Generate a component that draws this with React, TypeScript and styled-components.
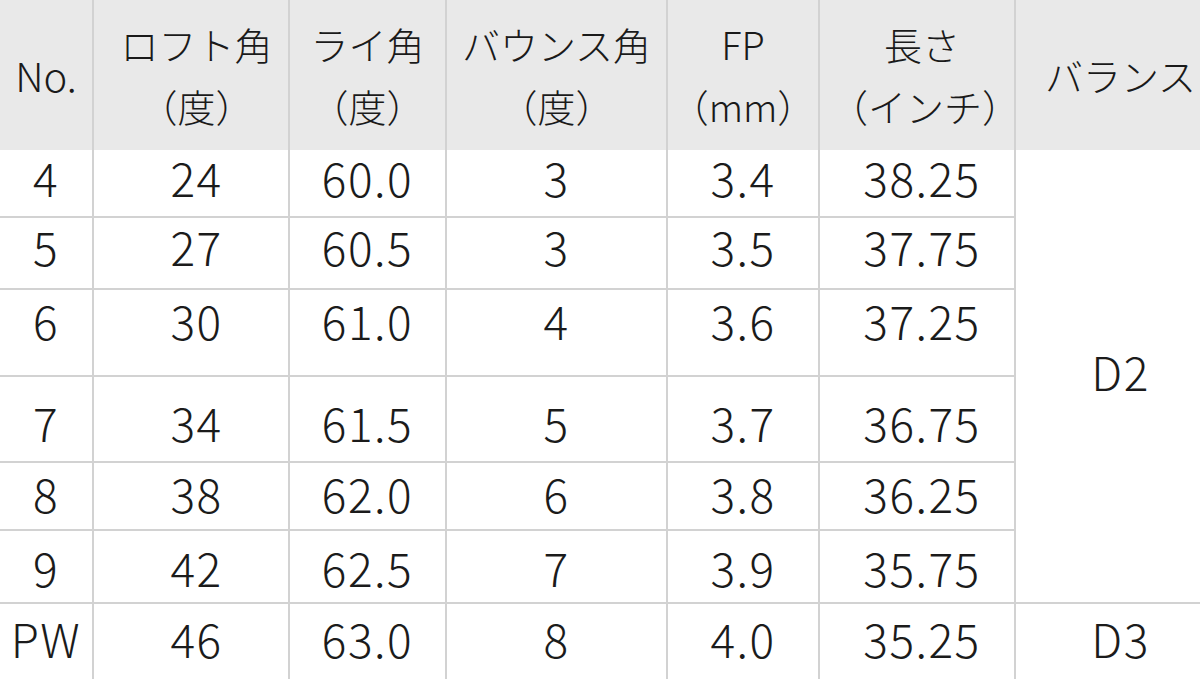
import React from "react";
import styled, { createGlobalStyle } from "styled-components";

const Global = createGlobalStyle`
  html, body { margin: 0; padding: 0; background: #ffffff; overflow: hidden; }
  body { font-family: "Noto Sans CJK JP", "Noto Sans", sans-serif; color: #1b1b1b; }
`;

const LINE = "#d2d2d2";

const Table = styled.table`
  border-collapse: separate;
  border-spacing: 0;
  table-layout: fixed;
  width: 1225px;
`;

const HeadCell = styled.th<{ $size?: number; $shift?: number; $last?: boolean }>`
  box-sizing: border-box;
  height: 150px;
  background: #e9e9e9;
  border-right: ${(p) => (p.$last ? "none" : `2px solid ${LINE}`)};
  font-weight: 300;
  font-size: ${(p) => p.$size ?? 38}px;
  line-height: 62px;
  color: #1a1a1a;
  text-align: center;
  vertical-align: middle;
  padding: 0 0 0 ${(p) => p.$shift ?? 0}px;
  white-space: nowrap;
`;

const Cell = styled.td<{ $h: number; $pad: number; $shift?: number; $last?: boolean }>`
  box-sizing: border-box;
  height: ${(p) => p.$h}px;
  border-right: ${(p) => (p.$last ? "none" : `2px solid ${LINE}`)};
  border-bottom: 2px solid ${LINE};
  font-weight: 300;
  font-size: 46px;
  line-height: 46px;
  letter-spacing: 1.5px;
  text-align: center;
  vertical-align: top;
  padding: ${(p) => p.$pad}px 0 0 ${(p) => p.$shift ?? 0}px;
  white-space: nowrap;
`;

const MergedCell = styled.td`
  border-bottom: 2px solid ${LINE};
  font-weight: 300;
  font-size: 46px;
  line-height: 46px;
  letter-spacing: 1.5px;
  text-align: center;
  vertical-align: middle;
  padding: 0 0 10px 0;
`;

const widths = [94, 196, 157, 221, 152, 196, 209];
const shifts = [0, 11, 0, 0, 0, 10, 0];

type Row = { no: string; loft: string; lie: string; bounce: string; fp: string; len: string; h: number; pad: number };

const rows: Row[] = [
  { no: "4", loft: "24", lie: "60.0", bounce: "3", fp: "3.4", len: "38.25", h: 68, pad: 4 },
  { no: "5", loft: "27", lie: "60.5", bounce: "3", fp: "3.5", len: "37.75", h: 72, pad: 5 },
  { no: "6", loft: "30", lie: "61.0", bounce: "4", fp: "3.6", len: "37.25", h: 87, pad: 7 },
  { no: "7", loft: "34", lie: "61.5", bounce: "5", fp: "3.7", len: "36.75", h: 86, pad: 22 },
  { no: "8", loft: "38", lie: "62.0", bounce: "6", fp: "3.8", len: "36.25", h: 68, pad: 7 },
  { no: "9", loft: "42", lie: "62.5", bounce: "7", fp: "3.9", len: "35.75", h: 73, pad: 13 },
  { no: "PW", loft: "46", lie: "63.0", bounce: "8", fp: "4.0", len: "35.25", h: 80, pad: 11 },
];

export default function App() {
  return (
    <>
      <Global />
      <Table>
        <colgroup>
          {widths.map((w, i) => (
            <col key={i} style={{ width: w }} />
          ))}
        </colgroup>
        <thead>
          <tr>
            <HeadCell $size={40}>No.</HeadCell>
            <HeadCell $shift={shifts[1]}>ロフト角<br />（度）</HeadCell>
            <HeadCell>ライ角<br />（度）</HeadCell>
            <HeadCell>バウンス角<br />（度）</HeadCell>
            <HeadCell>FP<br />（mm）</HeadCell>
            <HeadCell $shift={shifts[5]}>長さ<br />（インチ）</HeadCell>
            <HeadCell $last>バランス</HeadCell>
          </tr>
        </thead>
        <tbody>
          {rows.map((r, i) => {
            const vals = [r.no, r.loft, r.lie, r.bounce, r.fp, r.len];
            return (
              <tr key={r.no}>
                {vals.map((v, j) => (
                  <Cell key={j} $h={r.h} $pad={r.pad} $shift={shifts[j]}>
                    {v}
                  </Cell>
                ))}
                {i === 0 && <MergedCell rowSpan={6}>D2</MergedCell>}
                {i === 6 && (
                  <Cell $h={r.h} $pad={r.pad} $last>
                    D3
                  </Cell>
                )}
              </tr>
            );
          })}
        </tbody>
      </Table>
    </>
  );
}
